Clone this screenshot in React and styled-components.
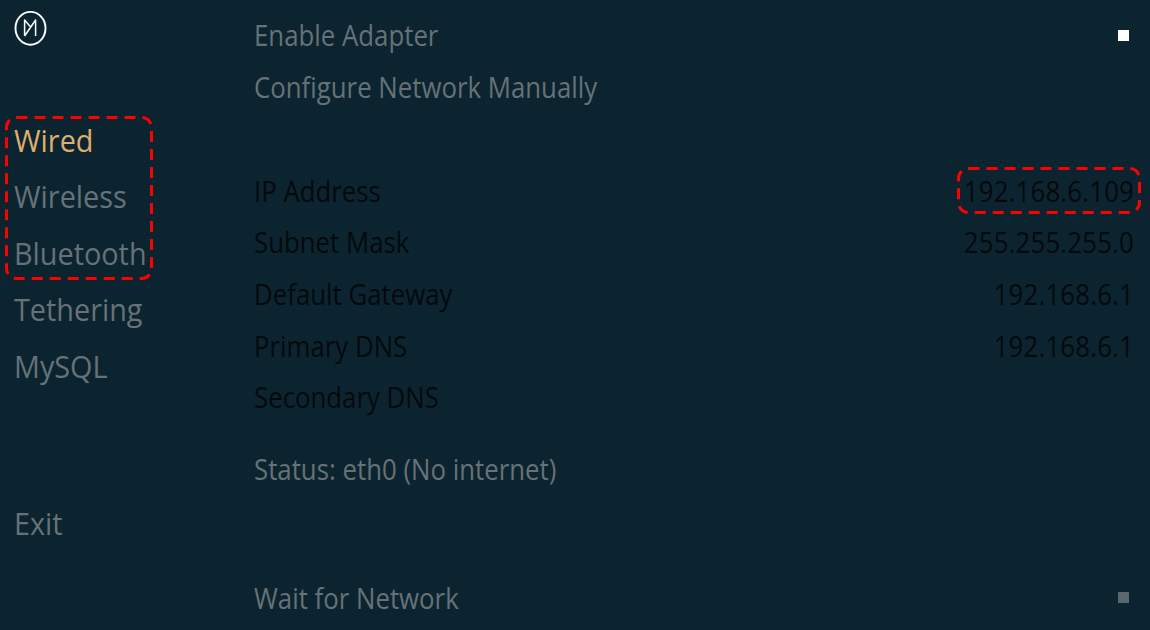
import React from 'react';
import styled, { createGlobalStyle } from 'styled-components';

const Global = createGlobalStyle`
  html, body { margin: 0; height: 100%; background: #0c2430; }
  body { font-family: "Open Sans", "Noto Sans", sans-serif; overflow: hidden; }
`;

const Screen = styled.div`
  display: flex;
  width: 1150px;
  height: 630px;
  background: #0c2430;
`;

const Sidebar = styled.nav`
  display: flex;
  flex-direction: column;
  width: 254px;
  flex: none;
  padding: 11px 0 0 14px;
  box-sizing: border-box;
`;

const Logo = styled.svg`
  display: block;
  width: 33px;
  height: 36px;
  margin-bottom: 65px;
`;

// the source picture is stretched a little in height
const Label = styled.span`
  display: inline-block;
  transform: scaleY(1.1);
`;

const MenuItem = styled.div`
  height: 56.4px;
  line-height: 56.4px;
  font-size: 28.8px;
  color: ${p => (p.$active ? '#dfae6d' : '#667277')};
`;

const Spacer = styled.div`
  height: ${p => p.$h}px;
`;

const Marked = styled.div`
  position: relative;
  width: fit-content;
`;

const DashSvg = styled.svg`
  position: absolute;
  left: ${p => p.$x}px;
  top: ${p => p.$y}px;
  overflow: visible;
  pointer-events: none;
`;

const Dash = ({ x, y, w, h }) => (
  <DashSvg $x={x} $y={y} width={w} height={h}>
    <rect x="1.5" y="1.5" width={w - 3} height={h - 3} rx="10" fill="none" stroke="#ff0000" strokeWidth="3" strokeDasharray="11 7" />
  </DashSvg>
);

const Main = styled.main`
  display: flex;
  flex-direction: column;
  flex: 1;
  padding: 9.5px 16px 0 0;
`;

const Row = styled.div`
  display: flex;
  justify-content: space-between;
  align-items: center;
  height: 51.6px;
  flex: none;
  font-size: 25.8px;
  color: ${p => (p.$dark ? '#04090c' : '#667277')};
`;

const Value = styled(Label)`
  letter-spacing: 0.18px;
`;

const Toggle = styled.span`
  display: block;
  width: 11px;
  height: 11px;
  margin-right: 5px;
  background: ${p => (p.$on ? '#ffffff' : '#5a676e')};
`;

const networkInfo = [
  ['IP Address', '192.168.6.109'],
  ['Subnet Mask', '255.255.255.0'],
  ['Default Gateway', '192.168.6.1'],
  ['Primary DNS', '192.168.6.1'],
  ['Secondary DNS', ''],
];

export default function App() {
  return (
    <Screen>
      <Global />
      <Sidebar>
        <Logo viewBox="0 0 33 36">
          <ellipse cx="16.5" cy="17.3" rx="15" ry="16.4" fill="none" stroke="#fff" strokeWidth="1.9" />
          <path d="M10.6 25V9l5.6 6.6M10.6 25l11-16v16" fill="none" stroke="#fff" strokeWidth="1.5" strokeLinejoin="round" />
        </Logo>
        <Marked>
          <Dash x={-9} y={4} w={148} h={164} />
          <MenuItem $active><Label>Wired</Label></MenuItem>
          <MenuItem><Label>Wireless</Label></MenuItem>
          <MenuItem><Label>Bluetooth</Label></MenuItem>
        </Marked>
        <MenuItem><Label>Tethering</Label></MenuItem>
        <MenuItem><Label>MySQL</Label></MenuItem>
        <Spacer $h={101} />
        <MenuItem><Label>Exit</Label></MenuItem>
      </Sidebar>
      <Main>
        <Row><Label>Enable Adapter</Label><Toggle $on /></Row>
        <Row><Label>Configure Network Manually</Label></Row>
        <Spacer $h={52.4} />
        {networkInfo.map(([label, value], i) => (
          <Row $dark key={label}>
            <Label>{label}</Label>
            {i === 0 ? (
              <Marked>
                <Dash x={-7} y={-6} w={184} h={47} />
                <Value>{value}</Value>
              </Marked>
            ) : (
              <Value>{value}</Value>
            )}
          </Row>
        ))}
        <Spacer $h={20.6} />
        <Row><Label>Status: eth0 (No internet)</Label></Row>
        <Spacer $h={76.6} />
        <Row><Label>Wait for Network</Label><Toggle /></Row>
      </Main>
    </Screen>
  );
}
